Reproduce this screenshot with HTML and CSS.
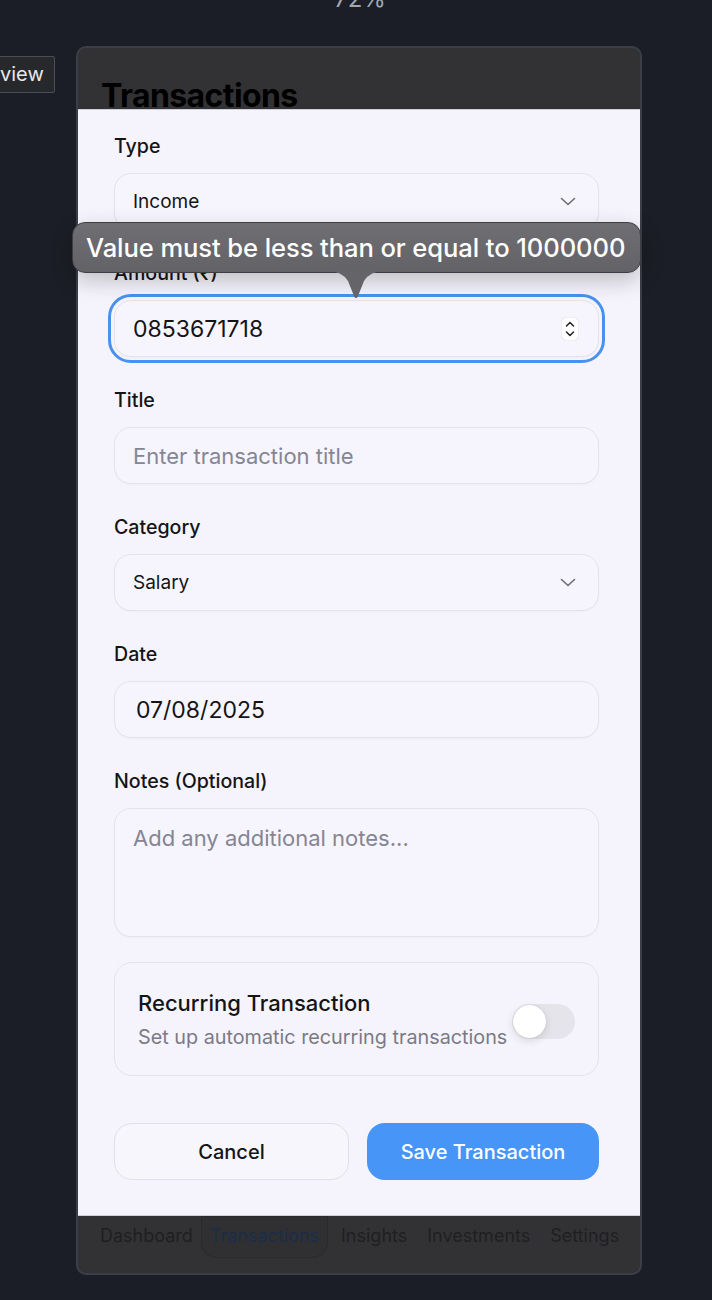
FILE: index.html
```html
<!DOCTYPE html>
<html lang="en">
<head>
<meta charset="utf-8">
<title>Transactions</title>
<link rel="stylesheet" href="styles.css">
</head>
<body>
<div class="toolbar"><div class="zoom">72%</div></div>
<div class="stage">
  <button class="view-btn">view</button>
  <div class="frame">
    <div class="frame-header"><h1 class="page-title">Transactions</h1></div>
    <div class="sheet">
      <div class="form">
        <div class="field">
          <div class="label">Type</div>
          <div class="control">
            <span class="value">Income</span>
            <svg class="chevron" width="16" height="9" viewBox="0 0 16 9"><path d="M1.5 1.5 L8 7.5 L14.5 1.5" fill="none" stroke="#6c6c76" stroke-width="1.6" stroke-linecap="round" stroke-linejoin="round"/></svg>
          </div>
        </div>
        <div class="field field-amount">
          <div class="label">Amount (₹)</div>
          <div class="control control-focus">
            <span class="value value-big">0853671718</span>
            <span class="spinner">
              <svg width="16" height="22" viewBox="0 0 16 22"><path d="M4.5 8 L8 4.5 L11.5 8" fill="none" stroke="#222" stroke-width="1.5" stroke-linecap="round" stroke-linejoin="round"/><path d="M4.5 14 L8 17.5 L11.5 14" fill="none" stroke="#222" stroke-width="1.5" stroke-linecap="round" stroke-linejoin="round"/></svg>
            </span>
          </div>
          <div class="tooltip">
            Value must be less than or equal to 1000000
            <svg class="tooltip-arrow" width="58" height="30" viewBox="0 0 58 30"><path d="M0 0 Q15 0 21 10 L27 25 Q29 29.5 31 25 L37 10 Q43 0 58 0 Z" fill="#646469"/></svg>
          </div>
        </div>
        <div class="field">
          <div class="label">Title</div>
          <div class="control"><span class="value placeholder">Enter transaction title</span></div>
        </div>
        <div class="field">
          <div class="label">Category</div>
          <div class="control">
            <span class="value">Salary</span>
            <svg class="chevron" width="16" height="9" viewBox="0 0 16 9"><path d="M1.5 1.5 L8 7.5 L14.5 1.5" fill="none" stroke="#6c6c76" stroke-width="1.6" stroke-linecap="round" stroke-linejoin="round"/></svg>
          </div>
        </div>
        <div class="field">
          <div class="label">Date</div>
          <div class="control"><span class="value value-date">07/08/2025</span></div>
        </div>
        <div class="field">
          <div class="label">Notes (Optional)</div>
          <div class="control textarea"><span class="value placeholder">Add any additional notes...</span></div>
        </div>
        <div class="recurring">
          <div class="recurring-text">
            <div class="recurring-title">Recurring Transaction</div>
            <div class="recurring-sub">Set up automatic recurring transactions</div>
          </div>
          <div class="toggle"><span class="knob"></span></div>
        </div>
        <div class="actions">
          <button class="btn btn-cancel">Cancel</button>
          <button class="btn btn-save">Save Transaction</button>
        </div>
      </div>
    </div>
    <div class="tabbar">
      <span class="tab">Dashboard</span>
      <span class="tab tab-active">Transactions</span>
      <span class="tab">Insights</span>
      <span class="tab">Investments</span>
      <span class="tab">Settings</span>
    </div>
  </div>
</div>
</body>
</html>
```
FILE: styles.css
```css
* { box-sizing: border-box; }
html, body { margin: 0; padding: 0; }
body {
  background: #1b1e26;
  font-family: Inter, "Noto Sans", sans-serif;
  height: 1300px;
  overflow: hidden;
}
.toolbar { height: 46px; text-align: center; display: flow-root; }
.zoom {
  font-size: 24px;
  line-height: 24px;
  color: #a2a6b0;
  margin-top: -13px;
  padding-left: 8px;
}
.stage { display: flex; align-items: flex-start; }
.view-btn {
  flex: none;
  width: 57px;
  margin-top: 10px;
  margin-left: -2px;
  height: 37px;
  padding: 0 0 0 1px;
  text-align: left;
  border: 1px solid #4d4e53;
  background: #27282c;
  color: #e8e8e8;
  font-family: Inter, sans-serif;
  font-size: 20px;
  line-height: 35px;
  border-radius: 2px;
}
.frame {
  flex: none;
  margin-left: 21px;
  width: 566px;
  height: 1229px;
  border: 2px solid #3b3e49;
  border-radius: 10px;
  background: #323234;
  display: flex;
  flex-direction: column;
}
.frame-header { height: 61px; overflow: hidden; flex: none; }
.page-title {
  margin: 0;
  padding: 28px 0 0 23px;
  font-size: 32px;
  line-height: 40px;
  font-weight: 700;
  color: #000;
  letter-spacing: -0.6px;
}
.sheet {
  flex: none;
  height: 1107px;
  background: #f5f4fc;
  border-top: 1px solid #cfcfd7;
  border-bottom: 1px solid #cfcfd7;
  padding: 25px 41px 0 36px;
}
.form { display: flex; flex-direction: column; }
.field { position: relative; margin-bottom: 32px; }
.label {
  font-size: 19.6px;
  line-height: 22px;
  font-weight: 500;
  color: #141416;
  margin-bottom: 16px;
}
.control {
  height: 57px;
  border: 1px solid #e3e3ea;
  border-radius: 17px;
  background: #f6f5fd;
  box-shadow: 0 1px 2px rgba(0,0,0,0.03);
  display: flex;
  align-items: center;
  justify-content: space-between;
  padding: 0 21px 0 18px;
}
.control-focus {
  outline: 3px solid #4a90ef;
  outline-offset: 3px;
}
.value { font-size: 19px; color: #141416; }
.value-big { font-size: 23px; }
.value-date { font-size: 23px; padding-left: 3px; }
.placeholder { color: #858593; font-size: 22px; }
.textarea { height: 129px; align-items: flex-start; padding-top: 16px; }
.spinner {
  width: 16px;
  height: 22px;
  background: #fff;
  border-radius: 4px;
  box-shadow: 0 0 1px rgba(0,0,0,0.3);
  display: flex;
  margin-right: -1px;
}
.chevron { margin-right: 1px; }
.tooltip {
  position: absolute;
  left: -42px;
  top: -40px;
  width: 569px;
  height: 51px;
  border-radius: 13px;
  background: linear-gradient(#6e6e73, #626267);
  border: 1px solid #3e3e42;
  box-shadow: 0 8px 22px rgba(0,0,0,0.22);
  color: #fff;
  font-size: 25.6px;
  font-weight: 500;
  line-height: 49px;
  padding-left: 13px;
  letter-spacing: -0.1px;
  white-space: nowrap;
}
.tooltip-arrow { position: absolute; left: 254px; top: 48px; }
.recurring {
  margin-top: -7px;
  height: 114px;
  border: 1px solid #e3e3ea;
  border-radius: 18px;
  display: flex;
  align-items: center;
  padding: 0 23px 0 23px;
  gap: 4px;
}
.recurring-text { flex: 1; white-space: nowrap; }
.recurring-title { font-size: 22px; font-weight: 500; color: #141416; line-height: 26px; }
.recurring-sub { font-size: 19.8px; color: #7a7a86; line-height: 24px; margin-top: 9px; }
.toggle {
  flex: none;
  width: 63px;
  height: 35px;
  border-radius: 18px;
  background: #e4e4ea;
  display: flex;
  align-items: center;
  padding-left: 1px;
  margin-top: 4px;
}
.knob {
  width: 33px;
  height: 33px;
  border-radius: 50%;
  background: #fff;
  box-shadow: 0 3px 8px rgba(0,0,0,0.12), 0 0 1px rgba(0,0,0,0.2);
}
.actions { display: flex; gap: 18px; margin-top: 47px; }
.btn {
  height: 57px;
  border-radius: 18px;
  font-family: Inter, sans-serif;
  font-size: 20px;
  font-weight: 500;
}
.btn-cancel {
  flex: 0 0 235px;
  background: #f7f6fc;
  border: 1px solid #e0e0e6;
  color: #141416;
}
.btn-save {
  flex: 1;
  background: #4795f7;
  border: none;
  color: #fff;
}
.tabbar {
  flex: 1;
  display: flex;
  align-items: flex-start;
  padding: 6px 0 0 22px;
  gap: 20px;
}
.tab {
  font-size: 18px;
  color: #1f1f21;
  line-height: 28px;
}
.tab-active {
  color: #1b2d49;
  padding: 6px 9px 0;
  margin: -6px -7px 0 -12px;
  height: 42px;
  border-radius: 0 0 16px 16px;
  box-shadow: inset 0 0 0 1px rgba(0,0,0,0.12);
  background: #303032;
}
```
